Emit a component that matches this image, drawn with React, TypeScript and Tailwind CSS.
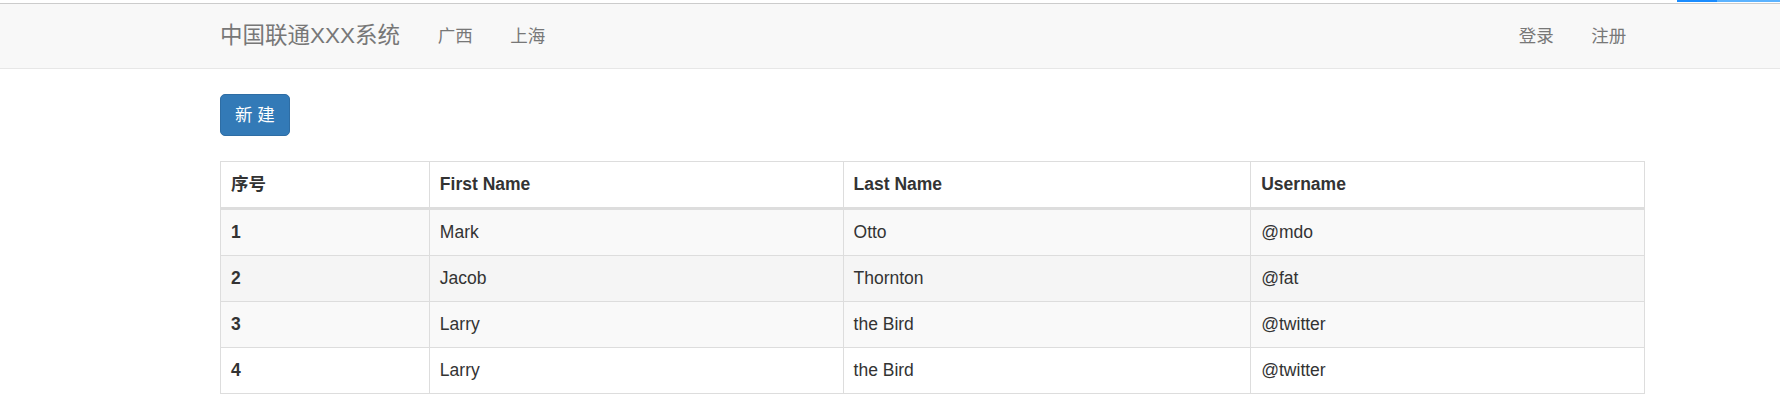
import React from "react";

const rows = [
  { id: 1, first: "Mark", last: "Otto", user: "@mdo", bg: "bg-[#f9f9f9]" },
  { id: 2, first: "Jacob", last: "Thornton", user: "@fat", bg: "bg-[#f5f5f5]" },
  { id: 3, first: "Larry", last: "the Bird", user: "@twitter", bg: "bg-[#f9f9f9]" },
  { id: 4, first: "Larry", last: "the Bird", user: "@twitter", bg: "bg-white" },
];

const font = "font-['Liberation_Sans','Noto_Sans_CJK_SC',sans-serif]";

export default function App() {
  return (
    <div className={`w-[1780px] h-[418px] bg-white text-[#333] ${font}`}>
      {/* browser strip */}
      <div className="relative h-[3px] bg-white">
        <div className="absolute right-0 top-0 h-[2px] w-[103px] bg-[#1a8cff]" />
        <div className="absolute right-0 top-0 h-[2px] w-[63px] bg-[#5cb3ff]" />
      </div>

      <nav className="h-[66px] bg-[#f8f8f8] border-t border-t-[#cccccc] border-b border-b-[#e7e7e7]">
        <div className="ml-[220px] w-[1425px] h-full flex items-center text-[#777]">
          <a className="text-[22.5px] leading-[25px] mr-[19px] mb-[2px]">中国联通XXX系统</a>
          <ul className="flex text-[17.5px] leading-[25px]">
            <li className="px-[18.75px]">广西</li>
            <li className="px-[18.75px]">上海</li>
          </ul>
          <ul className="ml-auto flex text-[17.5px] leading-[25px]">
            <li className="px-[18.75px]">登录</li>
            <li className="px-[18.75px]">注册</li>
          </ul>
        </div>
      </nav>

      <div className="ml-[220px] w-[1425px] pt-[25px]">
        <button className="h-[42px] px-[14px] rounded-[5px] bg-[#337ab7] border border-[#2e6da4] text-white text-[17.5px] leading-[25px]">
          新 建
        </button>

        <table className="mt-[25px] w-full border-collapse border border-[#ddd] text-[17.5px] leading-[25px]">
          <thead>
            <tr className="bg-white">
              <th className="w-[209px] text-left font-bold px-[10px] py-[10px] border border-[#ddd] border-b-[3px]">序号</th>
              <th className="w-[414px] text-left font-bold px-[10px] py-[10px] border border-[#ddd] border-b-[3px]">First Name</th>
              <th className="w-[408px] text-left font-bold px-[10px] py-[10px] border border-[#ddd] border-b-[3px]">Last Name</th>
              <th className="w-[394px] text-left font-bold px-[10px] py-[10px] border border-[#ddd] border-b-[3px]">Username</th>
            </tr>
          </thead>
          <tbody>
            {rows.map((r) => (
              <tr key={r.id} className={r.bg}>
                <td className="font-bold px-[10px] py-[10px] border border-[#ddd]">{r.id}</td>
                <td className="px-[10px] py-[10px] border border-[#ddd]">{r.first}</td>
                <td className="px-[10px] py-[10px] border border-[#ddd]">{r.last}</td>
                <td className="px-[10px] py-[10px] border border-[#ddd]">{r.user}</td>
              </tr>
            ))}
          </tbody>
        </table>
      </div>
    </div>
  );
}
